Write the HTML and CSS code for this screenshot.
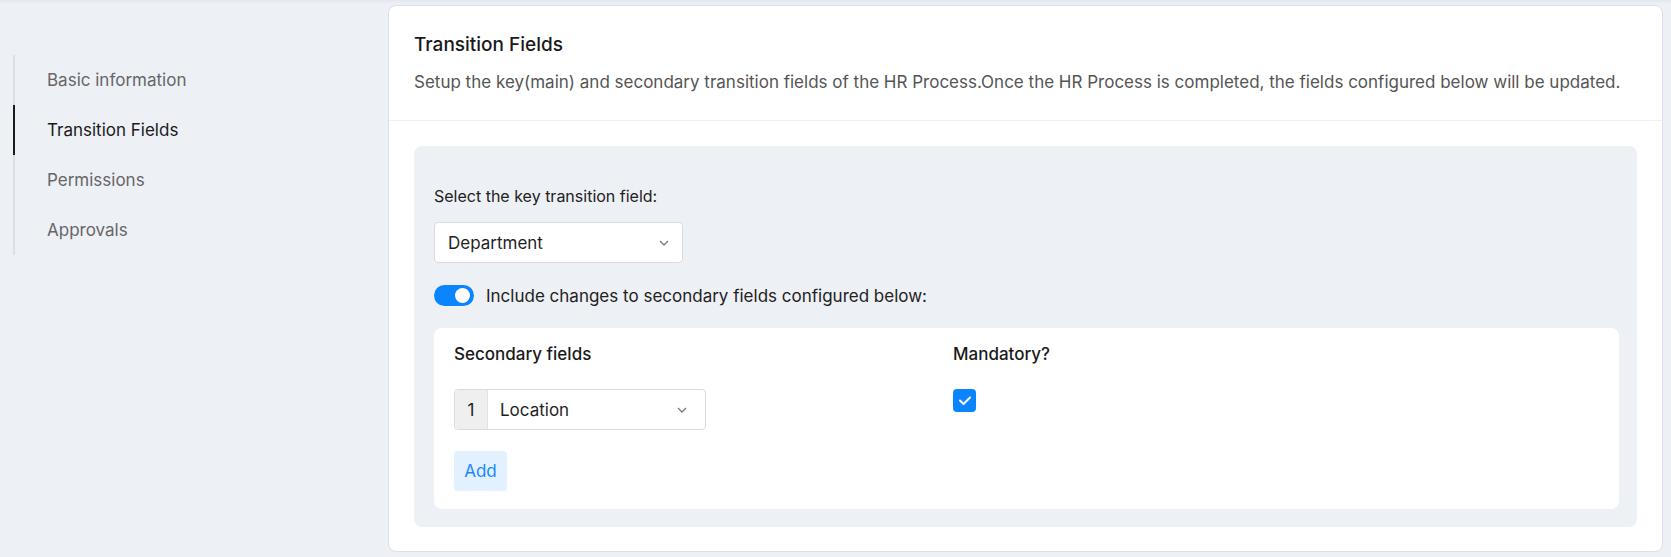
FILE: index.html
```html
<!DOCTYPE html>
<html lang="en">
<head>
  <meta charset="UTF-8" />
  <meta name="viewport" content="width=device-width, initial-scale=1.0" />
  <title>HR Process - Transition Fields</title>
  <link rel="stylesheet" href="styles.css">
</head>
<body>
  <div class="page">
    <aside class="side">
      <ul class="side-nav">
        <li>Basic information</li>
        <li class="active">Transition Fields</li>
        <li>Permissions</li>
        <li>Approvals</li>
      </ul>
    </aside>

    <main class="card">
      <div class="card-head">
        <h2>Transition Fields</h2>
        <p>Setup the key(main) and secondary transition fields of the HR Process.Once the HR Process is completed, the fields configured below will be updated.</p>
      </div>

      <div class="card-body">
        <div class="panel">
          <label class="field-label">Select the key transition field:</label>
          <div class="select key-select">
            <span>Department</span>
            <svg class="chev" width="10" height="6" viewBox="0 0 10 6"><path d="M1 1l4 4 4-4" fill="none" stroke="#7a7a7a" stroke-width="1.3"/></svg>
          </div>

          <div class="toggle-row">
            <span class="toggle"><span class="knob"></span></span>
            <span>Include changes to secondary fields configured below:</span>
          </div>

          <div class="inner">
            <div class="cols">
              <div class="col-main">
                <div class="col-title">Secondary fields</div>
                <div class="select num-select">
                  <span class="num">1</span>
                  <span class="val">Location</span>
                  <svg class="chev" width="10" height="6" viewBox="0 0 10 6"><path d="M1 1l4 4 4-4" fill="none" stroke="#7a7a7a" stroke-width="1.3"/></svg>
                </div>
                <button class="add-btn">Add</button>
              </div>
              <div class="col-side">
                <div class="col-title">Mandatory?</div>
                <span class="check">
                  <svg width="14" height="11" viewBox="0 0 14 11"><path d="M2 5.5l3.5 3.5L12 2.5" fill="none" stroke="#fff" stroke-width="2" stroke-linecap="round" stroke-linejoin="round"/></svg>
                </span>
              </div>
            </div>
          </div>
        </div>
      </div>
    </main>
  </div>
</body>
</html>
```

FILE: styles.css
```css
body {
  margin: 0;
  font-family: Inter, "Open Sans", sans-serif;
  background-color: #edf0f5;
  color: #1f1f1f;
  font-size: 17px;
}
.page {
  display: flex;
  height: 557px;
  box-sizing: border-box;
  padding: 5px 8px 0 0;
  background: linear-gradient(#e3e7ee, #edf0f5 4px);
}
.side {
  width: 388px;
  flex: none;
  padding-top: 50px;
  box-sizing: border-box;
}
.side-nav {
  list-style: none;
  margin: 0 0 0 13px;
  padding: 0;
  border-left: 2px solid #dcdfe4;
}
.side-nav li {
  height: 50px;
  line-height: 50px;
  padding-left: 32px;
  color: #666;
  font-size: 17px;
}
.side-nav li.active {
  color: #1a1a1a;
  border-left: 2px solid #1a1a1a;
  margin-left: -2px;
}
.card {
  flex: 1;
  height: 547px;
  background: #fff;
  border: 1px solid #d8e1eb;
  border-radius: 8px;
  box-sizing: border-box;
}
.card-head {
  padding: 25px 25px 0;
  height: 115px;
  box-sizing: border-box;
  border-bottom: 1px solid #eef0f3;
}
.card-head h2 {
  margin: 0;
  font-size: 19px;
  font-weight: 500;
  line-height: 28px;
  color: #1a1a1a;
}
.card-head p {
  margin: 11px 0 0;
  font-size: 17px;
  line-height: 24px;
  color: #555;
}
.card-body {
  padding: 25px 25px 25px;
}
.panel {
  background: #edf0f5;
  border-radius: 8px;
  padding: 38px 18px 18px 20px;
}
.field-label {
  display: block;
  font-size: 16px;
  line-height: 24px;
  color: #222;
}
.select {
  display: flex;
  align-items: center;
  background: #fff;
  border: 1px solid #d9dbe0;
  border-radius: 4px;
  height: 41px;
  box-sizing: border-box;
  font-size: 17px;
}
.key-select {
  width: 249px;
  margin-top: 14px;
  padding: 0 13px 0 13px;
  justify-content: space-between;
}
.chev {
  flex: none;
}
.toggle-row {
  display: flex;
  align-items: center;
  gap: 12px;
  margin-top: 22px;
  height: 21px;
  font-size: 17px;
  color: #222;
}
.toggle {
  width: 40px;
  height: 21px;
  border-radius: 11px;
  background: #0a84ff;
  position: relative;
  flex: none;
}
.knob {
  position: absolute;
  right: 4px;
  top: 3px;
  width: 15px;
  height: 15px;
  border-radius: 50%;
  background: #fff;
}
.inner {
  margin-top: 22px;
  background: #fff;
  border-radius: 8px;
  padding: 14px 20px 18px;
  height: 181px;
  box-sizing: border-box;
}
.cols {
  display: flex;
}
.col-main {
  width: 499px;
}
.col-title {
  font-size: 17px;
  font-weight: 500;
  line-height: 24px;
  color: #1a1a1a;
}
.num-select {
  width: 252px;
  margin-top: 23px;
  overflow: hidden;
  padding-right: 18px;
}
.num {
  width: 32px;
  height: 100%;
  background: #efefef;
  border-right: 1px solid #e2e2e2;
  display: flex;
  align-items: center;
  justify-content: center;
  color: #222;
}
.val {
  flex: 1;
  padding-left: 12px;
}
.add-btn {
  margin-top: 21px;
  height: 40px;
  width: 53px;
  border: none;
  border-radius: 4px;
  background: #e3f1ff;
  color: #1a88ff;
  font-family: inherit;
  font-size: 17px;
  padding: 0;
}
.check {
  margin-top: 23px;
  width: 23px;
  height: 23px;
  border-radius: 4px;
  background: #0a84ff;
  display: flex;
  align-items: center;
  justify-content: center;
}
```
